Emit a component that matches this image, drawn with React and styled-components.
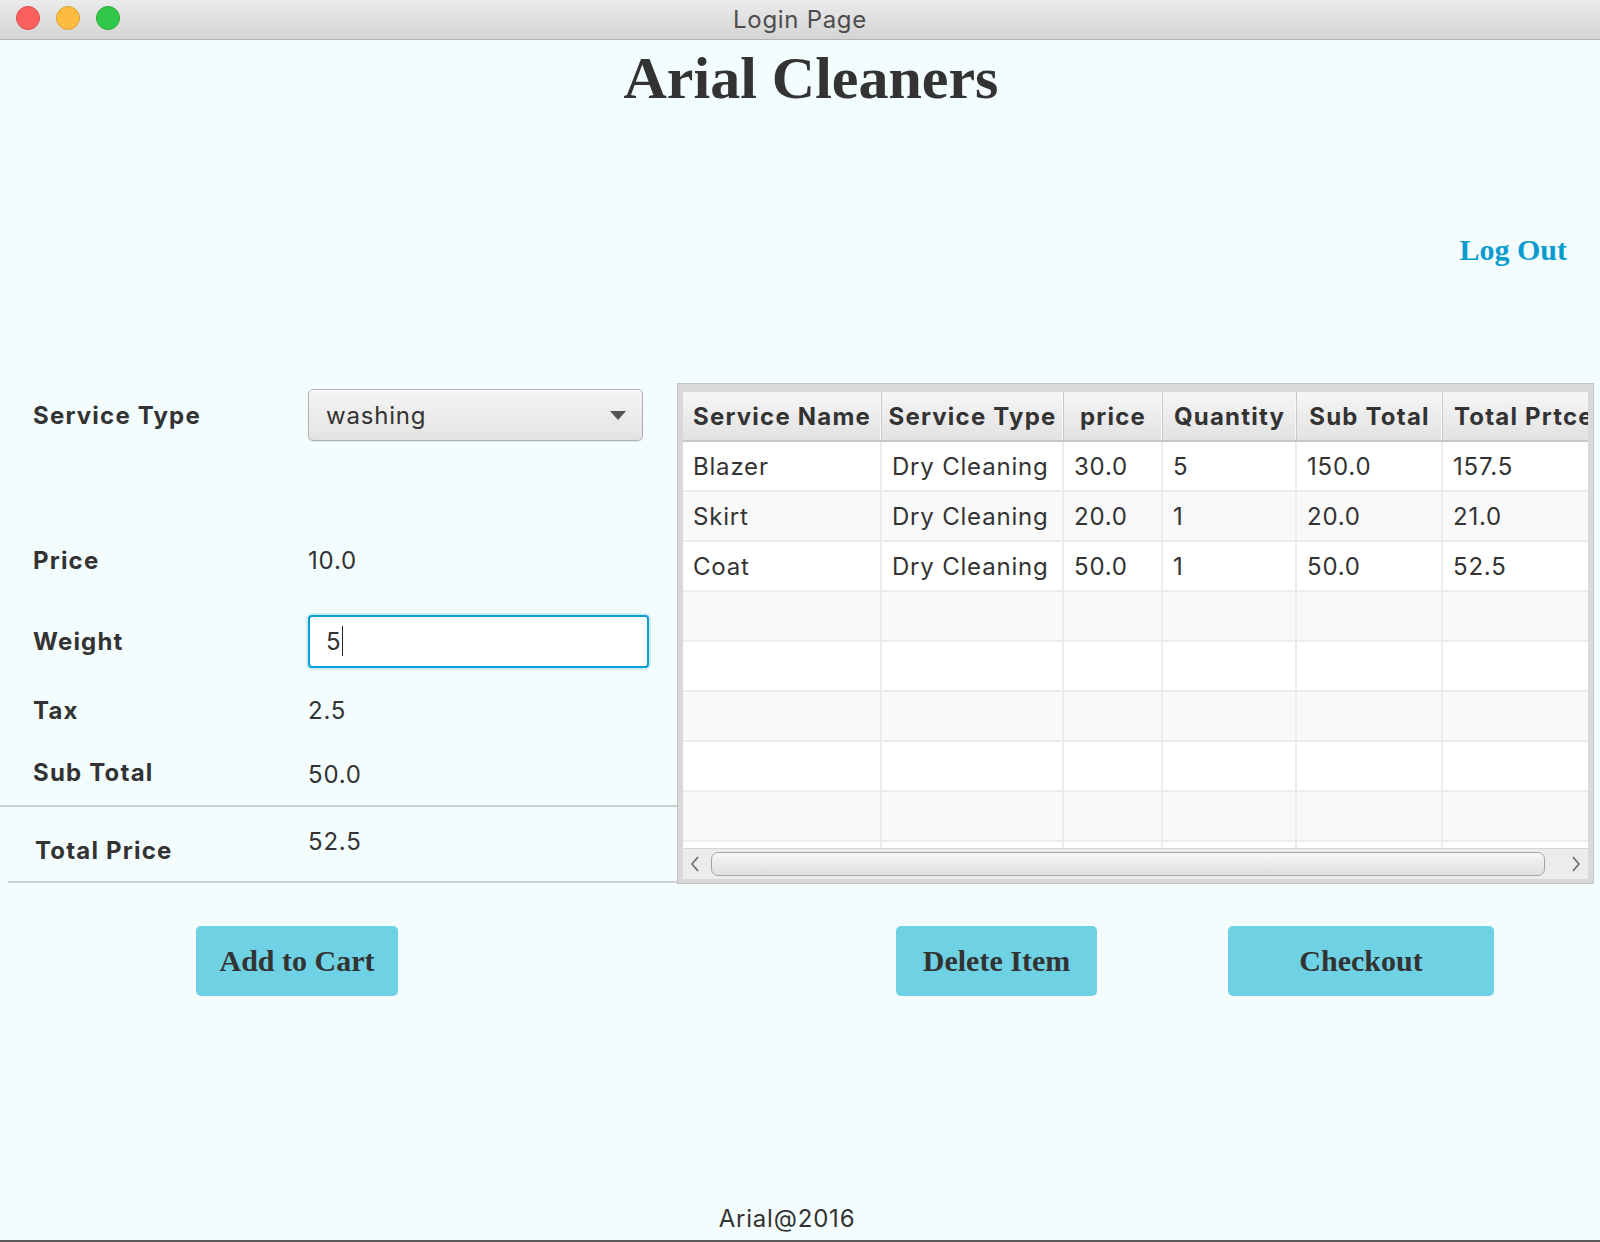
import React from "react";
import styled, { createGlobalStyle } from "styled-components";

const Global = createGlobalStyle`
  html, body { margin: 0; padding: 0; background: #f3fdfe; }
  body { font-family: Inter, "Open Sans", "Liberation Sans", sans-serif; color: #333; }
`;

const SANS = `Inter, "Open Sans", "Liberation Sans", sans-serif`;
const SERIF = `"Liberation Serif", "Times New Roman", serif`;

const Window = styled.div`
  width: 1600px;
  height: 1242px;
  display: flex;
  flex-direction: column;
  background: #f3fdfe;
  box-sizing: border-box;
  border-bottom: 2px solid #5a5a5a;
  overflow: hidden;
`;

const TitleBar = styled.div`
  height: 39px;
  flex: none;
  position: relative;
  display: flex;
  align-items: center;
  justify-content: center;
  background: linear-gradient(#ebebeb, #d4d4d4);
  border-bottom: 1px solid #b4b4b4;
`;

const Lights = styled.div`
  position: absolute;
  left: 16px;
  top: 6px;
  display: flex;
  gap: 16px;
`;

const Light = styled.span`
  width: 22px;
  height: 22px;
  border-radius: 50%;
  background: ${(p) => p.$bg};
  border: 1px solid ${(p) => p.$bd};
`;

const WindowTitle = styled.div`
  font-family: ${SANS};
  font-size: 24px;
  letter-spacing: 0.7px;
  color: #4d4d4d;
`;

const Title = styled.h1`
  margin: 3px 0 0;
  height: 70px;
  line-height: 70px;
  text-align: center;
  font-family: ${SERIF};
  font-weight: bold;
  font-size: 60px;
  color: #333;
  padding-left: 22px;
`;

const LogOutRow = styled.div`
  margin-top: 119px;
  margin-bottom: 1px;
  display: flex;
  justify-content: flex-end;
  padding-right: 33px;
`;

const LogOut = styled.a`
  font-family: ${SERIF};
  font-weight: bold;
  font-size: 30px;
  line-height: 36px;
  color: #0a9bcf;
  cursor: pointer;
`;

const Main = styled.div`
  margin-top: 114px;
  display: flex;
  height: 501px;
`;

const Form = styled.div`
  width: 677px;
  flex: none;
  display: flex;
  flex-direction: column;
`;

const Row = styled.div`
  display: flex;
  align-items: center;
  height: ${(p) => p.$h}px;
  margin-top: ${(p) => p.$mt || 0}px;
  padding-left: 33px;
`;

const Label = styled.div`
  width: 275px;
  flex: none;
  font-family: ${SANS};
  font-weight: 700;
  font-size: 24px;
  letter-spacing: 1.2px;
  color: #333;
  transform: translateY(${(p) => p.$dy || 0}px);
  margin-left: ${(p) => p.$ml || 0}px;
  margin-right: ${(p) => -(p.$ml || 0)}px;
`;

const Value = styled.div`
  font-family: ${SANS};
  font-size: 24px;
  letter-spacing: 0.8px;
  color: #333;
  transform: translateY(${(p) => p.$dy || 0}px);
`;

const Select = styled.div`
  width: 335px;
  height: 52px;
  box-sizing: border-box;
  border: 1px solid #b0b0b0;
  border-radius: 5px;
  background: linear-gradient(#f5f5f5, #e3e3e3);
  box-shadow: inset 0 1px 0 #fff, 0 1px 1px rgba(0,0,0,0.08);
  display: flex;
  align-items: center;
  justify-content: space-between;
  padding: 0 16px 0 17px;
  font-family: ${SANS};
  font-size: 24px;
  letter-spacing: 0.8px;
  color: #333;
`;

const Caret = styled.span`
  width: 0;
  height: 0;
  border-left: 8px solid transparent;
  border-right: 8px solid transparent;
  border-top: 9px solid #555;
`;

const Input = styled.div`
  width: 341px;
  height: 53px;
  box-sizing: border-box;
  border: 2px solid #0a9fd6;
  border-radius: 4px;
  background: #fff;
  box-shadow: 0 0 0 2px #cdeef8;
  display: flex;
  align-items: center;
  padding-left: 16px;
  font-family: ${SANS};
  font-size: 24px;
  color: #333;
`;

const Cursor = styled.span`
  display: inline-block;
  width: 1.5px;
  height: 30px;
  background: #222;
  margin-left: 1px;
`;

const Divider = styled.div`
  height: 2px;
  background: #cfcfcf;
  margin-top: ${(p) => p.$mt || 0}px;
  margin-left: ${(p) => p.$ml || 0}px;
`;

const TableFrame = styled.div`
  width: 917px;
  height: 501px;
  box-sizing: border-box;
  background: #d9d9d9;
  border: 1px solid #c4c4c4;
  padding: 8px 5px 4px 5px;
  display: flex;
  flex-direction: column;
`;

const TableInner = styled.div`
  flex: 1;
  display: flex;
  flex-direction: column;
  background: #fff;
  overflow: hidden;
`;

const Grid = styled.div`
  flex: 1;
  overflow: hidden;
  display: grid;
  grid-template-columns: 199px 182px 99px 134px 146px 200px;
  grid-auto-rows: 50px;
  align-content: start;
`;

const HeadCell = styled.div`
  display: flex;
  align-items: center;
  justify-content: ${(p) => (p.$left ? "flex-start" : "center")};
  padding-left: ${(p) => (p.$left ? 11 : 0)}px;
  white-space: nowrap;
  overflow: hidden;
  font-family: ${SANS};
  font-weight: 700;
  font-size: 24px;
  letter-spacing: 1.2px;
  color: #333;
  background: linear-gradient(#f6f6f6, #e2e2e2);
  border-right: 1px solid #c9c9c9;
  box-shadow: inset -1px 0 0 #f8f8f8;
  border-bottom: 2px solid #c6c6c6;
  box-sizing: border-box;
`;

const Cell = styled.div`
  display: flex;
  align-items: center;
  padding-left: 10px;
  white-space: nowrap;
  overflow: hidden;
  font-family: ${SANS};
  font-size: 24px;
  letter-spacing: 0.8px;
  color: #333;
  background: ${(p) => (p.$odd ? "#f9f9f9" : "#ffffff")};
  border-right: 2px solid #ececec;
  border-bottom: 2px solid #ececec;
  box-sizing: border-box;
`;

const ScrollBar = styled.div`
  height: 31px;
  flex: none;
  display: flex;
  align-items: center;
  background: #ececec;
  border-top: 1px solid #d6d6d6;
  box-sizing: border-box;
  padding: 0 6px;
  gap: 10px;
`;

const Arrow = styled.svg`
  width: 12px;
  height: 18px;
  flex: none;
`;

const Track = styled.div`
  flex: 1;
  display: flex;
  align-items: center;
`;

const Thumb = styled.div`
  height: 24px;
  box-sizing: border-box;
  border: 1px solid #a6a6a6;
  border-radius: 7px;
  background: linear-gradient(#f7f7f7, #dedede);
`;

const Buttons = styled.div`
  margin-top: 42px;
  height: 70px;
  display: flex;
  padding-left: 196px;
`;

const Button = styled.button`
  width: ${(p) => p.$w}px;
  height: 70px;
  margin-left: ${(p) => p.$ml || 0}px;
  border: none;
  border-radius: 5px;
  background: #6ed2e4;
  font-family: ${SERIF};
  font-weight: bold;
  font-size: 30px;
  color: #333;
  padding: 0;
  cursor: pointer;
`;

const Footer = styled.div`
  margin-top: auto;
  margin-bottom: 6px;
  text-align: center;
  font-family: ${SANS};
  font-size: 24px;
  letter-spacing: 0.8px;
  line-height: 30px;
  color: #333;
  padding-right: 26px;
`;

const headers = ["Service Name", "Service Type", "price", "Quantity", "Sub Total", "Total Prtce"];
const rows = [
  ["Blazer", "Dry Cleaning", "30.0", "5", "150.0", "157.5"],
  ["Skirt", "Dry Cleaning", "20.0", "1", "20.0", "21.0"],
  ["Coat", "Dry Cleaning", "50.0", "1", "50.0", "52.5"],
  ["", "", "", "", "", ""],
  ["", "", "", "", "", ""],
  ["", "", "", "", "", ""],
  ["", "", "", "", "", ""],
  ["", "", "", "", "", ""],
  ["", "", "", "", "", ""],
];

export default function App() {
  return (
    <>
      <Global />
      <Window>
        <TitleBar>
          <Lights>
            <Light $bg="#fc605c" $bd="#de4a45" />
            <Light $bg="#fdbc40" $bd="#de9f34" />
            <Light $bg="#34c84a" $bd="#27aa35" />
          </Lights>
          <WindowTitle>Login Page</WindowTitle>
        </TitleBar>

        <Title>Arial Cleaners</Title>

        <LogOutRow>
          <LogOut>Log Out</LogOut>
        </LogOutRow>

        <Main>
          <Form>
            <Row $h={64}>
              <Label>Service Type</Label>
              <Select>
                washing
                <Caret />
              </Select>
            </Row>
            <Row $h={60} $mt={83}>
              <Label>Price</Label>
              <Value>10.0</Value>
            </Row>
            <Row $h={62} $mt={20}>
              <Label>Weight</Label>
              <Input>
                5<Cursor />
              </Input>
            </Row>
            <Row $h={60} $mt={8}>
              <Label>Tax</Label>
              <Value>2.5</Value>
            </Row>
            <Row $h={60} $mt={2}>
              <Label>Sub Total</Label>
              <Value $dy={2}>50.0</Value>
            </Row>
            <Divider $mt={3} />
            <Row $h={74}>
              <Label $dy={6} $ml={2}>Total Price</Label>
              <Value $dy={-3}>52.5</Value>
            </Row>
            <Divider $ml={8} />
          </Form>

          <TableFrame>
            <TableInner>
              <Grid>
                {headers.map((h, i) => (
                  <HeadCell key={h} $left={i === headers.length - 1}>{h}</HeadCell>
                ))}
                {rows.map((r, i) =>
                  r.map((c, j) => (
                    <Cell key={`${i}-${j}`} $odd={i % 2 === 1}>
                      {c}
                    </Cell>
                  ))
                )}
              </Grid>
              <ScrollBar>
                <Arrow viewBox="0 0 12 18">
                  <path d="M9 2 L3 9 L9 16" fill="none" stroke="#6b6b6b" strokeWidth="1.6" />
                </Arrow>
                <Track>
                  <Thumb style={{ width: "98.2%" }} />
                </Track>
                <Arrow viewBox="0 0 12 18">
                  <path d="M3 2 L9 9 L3 16" fill="none" stroke="#6b6b6b" strokeWidth="1.6" />
                </Arrow>
              </ScrollBar>
            </TableInner>
          </TableFrame>
        </Main>

        <Buttons>
          <Button $w={202}>Add to Cart</Button>
          <Button $w={201} $ml={498}>Delete Item</Button>
          <Button $w={266} $ml={131}>Checkout</Button>
        </Buttons>

        <Footer>Arial@2016</Footer>
      </Window>
    </>
  );
}
